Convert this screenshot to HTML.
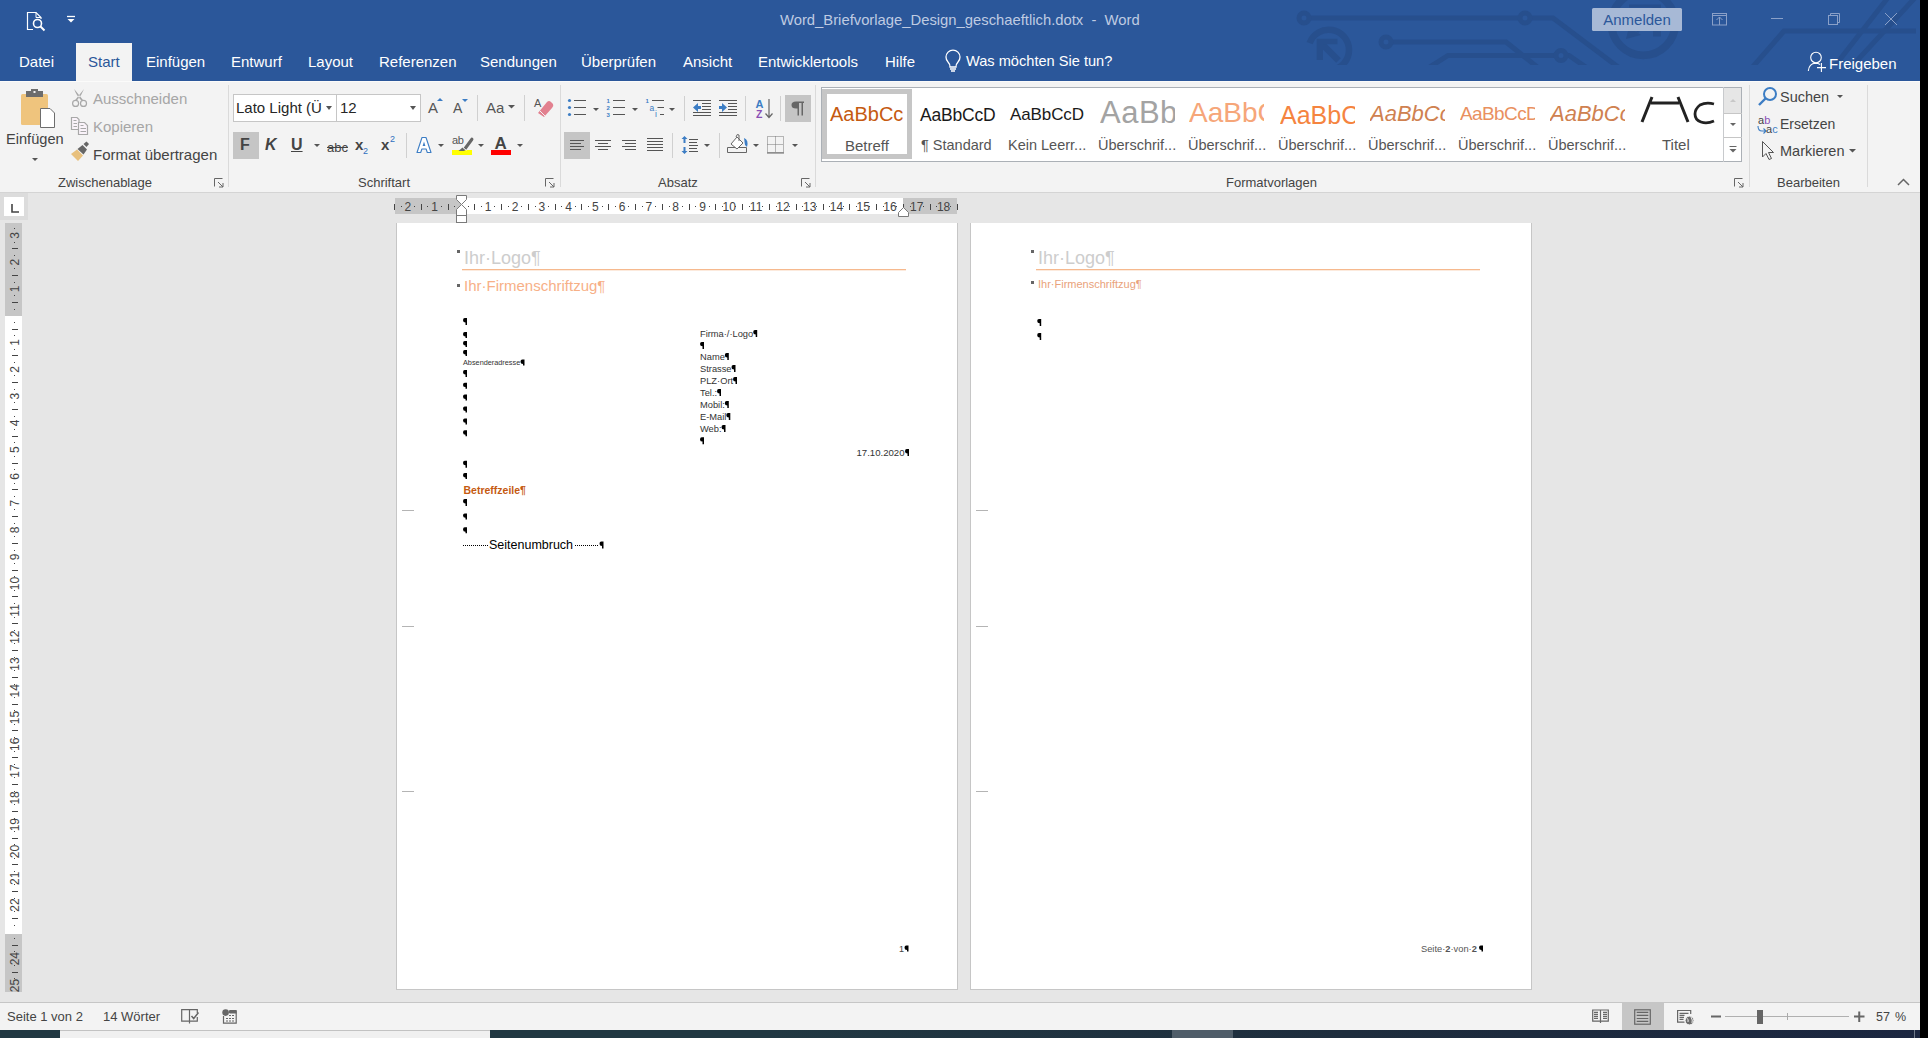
<!DOCTYPE html>
<html><head><meta charset="utf-8">
<style>
*{margin:0;padding:0;box-sizing:border-box}
html,body{width:1928px;height:1038px;overflow:hidden;background:#000;font-family:"Liberation Sans",sans-serif}
.a{position:absolute;white-space:nowrap}
#app{position:absolute;left:0;top:0;width:1920px;height:1030px;background:#e6e6e6;overflow:hidden}
#title{position:absolute;left:0;top:0;width:1920px;height:81px;background:#2b579a}
.tab{position:absolute;top:53px;font-size:15px;color:#fff;line-height:17px}
#ribbon{position:absolute;left:0;top:81px;width:1920px;height:112px;background:#f3f3f3;border-bottom:1px solid #d4d4d4}
.rt{position:absolute;font-size:15px;color:#444;line-height:17px;white-space:nowrap}
.gl{position:absolute;margin-top:1px;font-size:13px;color:#444;line-height:15px;white-space:nowrap}
.sep{position:absolute;top:4px;width:1px;height:102px;background:#dadada}
#status{position:absolute;left:0;top:1002px;width:1920px;height:28px;background:#f3f3f3;border-top:1px solid #c6c6c6}
.page{position:absolute;top:223px;width:562px;height:767px;background:#fff;border:1px solid #c6c6c6;border-top:none}
</style></head><body>
<div id="app">
 <div id="title">

  <svg class="a" style="left:0;top:0" width="1920" height="81">
   <defs><clipPath id="cp"><rect x="0" y="0" width="1920" height="65"/></clipPath></defs>
   <g clip-path="url(#cp)" fill="none" stroke="#274f8d" stroke-width="5" stroke-linecap="butt">
    <path d="M1309 18 H1519 M1530 18 H1553 L1622 70"/>
    <circle cx="1304" cy="18" r="5"/><circle cx="1525" cy="18" r="5"/>
    <path d="M1391 42 H1506 L1541 70"/>
    <circle cx="1386" cy="42" r="5"/>
    <path d="M1425 70 L1448 55.5 H1556 M1566 55.5 H1569 L1590 70"/>
    <circle cx="1561" cy="55.5" r="5"/>
    <path d="M1309.6 43.1 A20.3 20.3 0 1 1 1332.2 70" stroke-width="6.5"/>
    <path d="M1320 42 L1338.5 60.5" stroke-width="6.5"/>
    <path d="M1316.7 38.8 H1337.4 V44.3 H1323 V60 H1316.7 Z" fill="#274f8d" stroke="none"/>
    <circle cx="1643.3" cy="23.5" r="31.9" stroke-width="7.8"/>
    <path d="M1629 4.4 H1661 V36.4 H1653 V7.4 H1629 Z" fill="#274f8d" stroke="none"/>
    <path d="M1655 9 L1636 31" stroke-width="6"/>
    <path d="M1626 39 L1629 27 L1641 35 Z" fill="#274f8d" stroke="none"/>
    <path d="M1750 70 L1784 31 H1916" />
    <path d="M1831.7 70 L1890 -5 M1848.4 70 L1917.6 -5"/>
   </g>
  </svg>

  <svg class="a" style="left:0;top:0" width="1920" height="81" fill="none" stroke="#fff" stroke-width="1.2">
   <path d="M33 29.5 H27.5 V12.5 H36 L41 17.5 V19"/>
   <path d="M36 12.5 V17.5 H41" stroke-width="1"/>
   <circle cx="37.5" cy="23.5" r="4" stroke-width="1.6"/>
   <path d="M40.5 26.5 L44.5 30.5" stroke-width="1.9"/>
   <path d="M67 16.5 H75" stroke-width="1.3"/>
   <path d="M67.5 19 H74.5 L71 22.5 Z" fill="#fff" stroke="none"/>
   <g stroke="#8aa0c8" stroke-width="1">
    <rect x="1712.5" y="13.5" width="14" height="11.5"/>
    <path d="M1712.5 15.5 H1726.5 M1719.5 25 V17 M1716.5 20 L1719.5 17 L1722.5 20"/>
    <path d="M1771 18.5 H1783"/>
    <rect x="1828.5" y="15.5" width="9" height="9"/>
    <path d="M1830.5 15.5 V13.5 H1839.5 V22.5 H1837.5"/>
    <path d="M1885 13 L1897 25 M1897 13 L1885 25"/>
   </g>
   <path d="M948 62 A7 7 0 1 1 958 62 Q956 64 956 67 H950 Q950 64 948 62 Z M950 69 H956 M951 71 H955" stroke-width="1.3"/>
   <circle cx="1816" cy="57.5" r="5.3" stroke-width="1.1"/>
   <path d="M1808.3 71 Q1809 63.5 1815.5 63.3 Q1818.5 63.3 1820 64.5 M1821.4 63 V72 M1817 67.6 H1826" stroke-width="1.1"/>
  </svg>
  <div class="a tab" style="left:19px">Datei</div>
  <div class="a" style="left:76px;top:43px;width:56px;height:38px;background:#f3f3f3"></div>
  <div class="a tab" style="left:88px;color:#2b579a">Start</div>
  <div class="a tab" style="left:146px">Einfügen</div>
  <div class="a tab" style="left:231px">Entwurf</div>
  <div class="a tab" style="left:308px">Layout</div>
  <div class="a tab" style="left:379px">Referenzen</div>
  <div class="a tab" style="left:480px">Sendungen</div>
  <div class="a tab" style="left:581px">Überprüfen</div>
  <div class="a tab" style="left:683px">Ansicht</div>
  <div class="a tab" style="left:758px">Entwicklertools</div>
  <div class="a tab" style="left:885px">Hilfe</div>
  <div class="a tab" style="left:966px;font-size:14.6px">Was möchten Sie tun?</div>
  <div class="a tab" style="left:1829px;top:55px">Freigeben</div>
  <div class="a" style="left:780px;top:12px;font-size:14.8px;color:#bfcbe2;line-height:17px">Word_Briefvorlage_Design_geschaeftlich.dotx&nbsp; -&nbsp; Word</div>
  <div class="a" style="left:1592px;top:8px;width:90px;height:23px;border-radius:1.5px;background:#a7b9d6;color:#2b579a;font-size:15px;line-height:23px;text-align:center">Anmelden</div>
 </div>

 <div id="ribbon">
  <div class="a" style="left:0;top:0;width:1920px;height:1px;background:#fbfbfa"></div>
  <!-- Zwischenablage -->
  <svg class="a" style="left:0;top:0" width="1920" height="112">
   <rect x="21" y="13" width="27" height="31" rx="1.5" fill="#efc47d"/>
   <rect x="26" y="10" width="17" height="6" fill="#6d6d6d"/>
   <rect x="31" y="8" width="7" height="4" fill="#6d6d6d"/>
   <rect x="33.5" y="10" width="2" height="2" fill="#f3f3f3"/>
   <path d="M40.5 46.5 V27.5 H50 L54.5 32 V46.5 Z" fill="#fff" stroke="#6d6d6d"/>
   <path d="M32 77 L35 80 L38 77 Z" fill="#555"/>
   <g stroke="#a8a8a8" fill="none" stroke-width="1.2">
    <circle cx="75.6" cy="22.4" r="3"/><circle cx="83.5" cy="22.4" r="3"/>
    <path d="M71.5 36.5 H77 L79 38.5 V48.5 H71.5 Z" fill="#faf3fa"/>
    <path d="M78.5 41.5 H84.5 L87.5 44.5 V53.5 H78.5 Z" fill="#faf3fa"/>
    <path d="M73.5 39.5 H76.5 M73.5 42.5 H77 M73.5 45.5 H77 M80.5 44.5 H83.5 M80.5 47.5 H86 M80.5 50.5 H86" stroke-width="1"/>
   </g>
   <path d="M74.2 8 Q76 14 81.6 19.8 L83 19 Q79 14 74.2 8 Z M84 8 Q82 14 76.6 19.8 L75.2 19 Q79.2 14 84 8 Z" fill="#a8a8a8"/>
   <path d="M71 73 L77 68.5 L83 74.5 L78 80 Z" fill="#e8c07c"/>
   <path d="M77.5 68 L82.5 64 L87 68.5 L83.5 73.5 Z" fill="#666"/>
   <path d="M83.5 63 L86.5 60.5 L89 63 L86.5 66 Z" fill="#666"/>
   <g fill="none" stroke="#666" stroke-width="1">
    <path d="M214.5 105.5 V97.5 H222.5"/><path d="M218 101 L223 106 M223 102 V106 H219"/>
    <path d="M801.5 105.5 V97.5 H809.5"/><path d="M805 101 L810 106 M810 102 V106 H806"/>
    <path d="M1734.5 105.5 V97.5 H1742.5"/><path d="M1738 101 L1743 106 M1743 102 V106 H1739"/>
    <path d="M545.5 105.5 V97.5 H553.5"/><path d="M549 101 L554 106 M554 102 V106 H550"/>
   </g>
  </svg>
  <div class="rt" style="left:6px;top:50px;font-size:14.6px">Einfügen</div>
  <div class="rt" style="left:93px;top:9px;color:#a6a6a6">Ausschneiden</div>
  <div class="rt" style="left:93px;top:37px;color:#a6a6a6">Kopieren</div>
  <div class="rt" style="left:93px;top:65px">Format übertragen</div>
  <div class="gl" style="left:58px;top:93px">Zwischenablage</div>
  <div class="gl" style="left:358px;top:93px">Schriftart</div>
  <div class="gl" style="left:658px;top:93px">Absatz</div>
  <div class="gl" style="left:1226px;top:93px">Formatvorlagen</div>
  <div class="gl" style="left:1777px;top:93px">Bearbeiten</div>

  <!-- Schriftart -->
  <div class="a" style="left:233px;top:13px;width:104px;height:28px;background:#fff;border:1px solid #c6c6c6"></div>
  <div class="a" style="left:336px;top:13px;width:85px;height:28px;background:#fff;border:1px solid #c6c6c6"></div>
  <div class="rt" style="left:236px;top:18px;color:#262626">Lato Light (Ü</div>
  <div class="rt" style="left:340px;top:18px;color:#262626">12</div>
  <div class="a" style="left:233px;top:51px;width:26px;height:27px;background:#c5c5c5"></div>
  <div class="rt" style="left:240px;top:55px;font-weight:bold;font-size:16px;color:#444">F</div>
  <div class="rt" style="left:265px;top:55px;font-weight:bold;font-style:italic;font-size:16px;color:#444">K</div>
  <div class="rt" style="left:291px;top:55px;font-weight:bold;font-size:16px;color:#444;text-decoration:underline">U</div>
  <div class="rt" style="left:327px;top:58px;font-size:13px;color:#444;text-decoration:line-through">abc</div>
  <div class="rt" style="left:355px;top:55px;font-weight:bold;font-size:15px;color:#444">x</div>
  <div class="rt" style="left:363px;top:62px;font-size:9px;color:#2f6fbf">2</div>
  <div class="rt" style="left:381px;top:55px;font-weight:bold;font-size:15px;color:#444">x</div>
  <div class="rt" style="left:390px;top:50px;font-size:9px;color:#2f6fbf">2</div>
  <div class="rt" style="left:428px;top:18px;font-size:15px;color:#555">A</div>
  <div class="rt" style="left:453px;top:19px;font-size:14px;color:#555">A</div>
  <div class="rt" style="left:486px;top:18px;font-size:15px;color:#555">Aa</div>
  <div class="rt" style="left:534px;top:14px;font-size:11px;color:#555">A</div>
  <div class="rt" style="left:494.5px;top:53.5px;font-size:17px;font-weight:bold;color:#444">A</div>
  <div class="rt" style="left:452px;top:51px;font-size:11px;color:#555;letter-spacing:-0.3px">ab</div>
  
  <svg class="a" style="left:0;top:0" width="1920" height="112">
   <g fill="#555">
    <path d="M326 25 L332 25 L329 29 Z"/><path d="M410 25 L416 25 L413 29 Z"/>
    <path d="M314 63 L320 63 L317 66 Z"/><path d="M438 63 L444 63 L441 66 Z"/>
    <path d="M478 63 L484 63 L481 66 Z"/><path d="M517 63 L523 63 L520 66 Z"/>
    <path d="M508 24 L515 24 L511.5 27.5 Z"/>
   </g>
   <path d="M437 20 L440 17 L443 20 Z" fill="#3c7dc4"/>
   <path d="M462 18 L468 18 L465 21 Z" fill="#3c7dc4"/>
   <rect x="452" y="69" width="20" height="5" fill="#ffff00"/>
   <rect x="491" y="69" width="20" height="5" fill="#ff0000"/>
   <path d="M463.5 67 L470.5 57.5 Q471.5 56 473 57 Q474 58 473 59.5 L466 69 Z" fill="#666"/><path d="M462.5 66.5 L465.5 69 L464 70 H458.5 Z" fill="#666"/><path d="M462.5 66 L466.5 69.5" stroke="#f3f3f3" stroke-width="0.9"/><path d="M417 71.5 L422 56.5 H426 L431 71.5 H427.3 L426.1 68 H421.9 L420.7 71.5 Z" fill="#fff" stroke="#3c7dc4" stroke-width="1.1" stroke-linejoin="round"/><path d="M422.6 65 H425.4 L424 60.5 Z" fill="#3c7dc4"/>
   <path d="M538 32 L547 21 Q549 19 551 21 L553 23 Q554 25 552 27 L544 36 Z" fill="#e2808f"/>
   <path d="M540 30 L545 35" stroke="#f3f3f3" stroke-width="1"/>
   <g stroke="#d0d0d0"><path d="M406.5 52 V77 M477.5 14 V40 M524.5 14 V40 M684.5 15 V40 M745.5 15 V40 M780.5 15 V40 M672.5 52 V77 M719.5 52 V77"/></g>
  </svg>

  <!-- Absatz -->
  <div class="a" style="left:564px;top:51px;width:26px;height:27px;background:#c5c5c5"></div>
  <div class="a" style="left:785px;top:14px;width:26px;height:27px;background:#c5c5c5"></div>
  <svg class="a" style="left:0;top:0" width="1920" height="112">
   <g fill="#3c7dc4">
    <circle cx="569.5" cy="19.5" r="1.6"/><circle cx="569.5" cy="26.5" r="1.6"/><circle cx="569.5" cy="33.5" r="1.6"/>
   </g>
   <g stroke="#555" stroke-width="1" fill="none">
    <path d="M574 19.5 H586 M574 26.5 H586 M574 33.5 H586"/>
    <path d="M613 19.5 H625 M613 26.5 H625 M613 33.5 H625"/>
    <path d="M652 19.5 H664 M657.5 26.5 H664 M660 33.5 H664"/>
    <path d="M693 19.5 H711 M702 22.5 H711 M702 25.5 H711 M702 28.5 H711 M693 31.5 H711 M693 34.5 H711" />
    <path d="M719 19.5 H737 M728 22.5 H737 M728 25.5 H737 M728 28.5 H737 M719 31.5 H737 M719 34.5 H737" />
    <path d="M570 59.5 H584 M570 62.5 H581 M570 65.5 H584 M570 68.5 H581"/>
    <path d="M595 59.5 H611 M598 62.5 H608 M595 65.5 H611 M598 68.5 H608"/>
    <path d="M622 59.5 H636 M625 62.5 H636 M622 65.5 H636 M625 68.5 H636"/>
    <path d="M647 57.5 H663 M647 60.5 H663 M647 63.5 H663 M647 66.5 H663 M647 69.5 H663"/>
    <path d="M689 58.5 H698 M689 61.5 H697 M689 64.5 H698 M689 67.5 H697 M689 70.5 H698"/>
    <path d="M769 18 V36 M765.5 32.5 L769 36.5 L772.5 32.5" stroke="#666" stroke-width="1.2"/>
    <path d="M727.5 71.5 H746.5 V66.5 H727.5 Z" stroke="#666"/>
    <path d="M731 63 L737 56 L743 62 L737 68 Z" stroke="#666" fill="#fff"/>
    <path d="M736 56 Q737 52 739 54 V60" stroke="#666"/>
    <rect x="767.5" y="55.5" width="16" height="16" stroke="#777" stroke-dasharray="1 1"/>
    <path d="M775.5 55.5 V71.5 M767.5 63.5 H783.5" stroke="#777" stroke-dasharray="1 1"/>
    <path d="M767 72 H784" stroke="#666"/>
   </g>
   <path d="M744 57 Q749 59 747 66 L745 64 Z" fill="#3c7dc4"/>
   <g fill="#3c7dc4" font-family="Liberation Sans" font-size="6" font-weight="bold">
    <text x="606.5" y="22">1</text><text x="606.5" y="29">2</text><text x="606.5" y="36">3</text>
    <text x="645.5" y="22">1</text></g><g fill="#3c7dc4" font-family="Liberation Sans" font-size="8.5"><text x="649.5" y="29.5">a</text><text x="655" y="36">i</text>
   </g>
   <path d="M693 26.5 L698 22 V25 H701 V28 H698 V31 Z" fill="#3c7dc4"/>
   <path d="M727 26.5 L722 22 V25 H719 V28 H722 V31 Z" fill="#3c7dc4"/>
   <path d="M681.5 58 L684.5 55 L687.5 58 H685.5 V62 H683.5 V58 Z M681.5 70 L684.5 73 L687.5 70 H685.5 V66 H683.5 V70 Z" fill="#3c7dc4"/>
   <g fill="#555">
    <path d="M593 27 L599 27 L596 30 Z"/><path d="M632 27 L638 27 L635 30 Z"/><path d="M669 27 L675 27 L672 30 Z"/>
    <path d="M704 63 L710 63 L707 66 Z"/><path d="M753 63 L759 63 L756 66 Z"/><path d="M792 63 L798 63 L795 66 Z"/>
   </g>
   <text x="755.5" y="26.5" font-family="Liberation Sans" font-size="11" font-weight="bold" fill="#3c7dc4">A</text>
   <text x="756" y="36.5" font-family="Liberation Sans" font-size="10.5" font-weight="bold" fill="#8a4fb5">Z</text>
   <path d="M804 101.5 H796 Q791.5 101.5 791.5 105 Q791.5 108.5 796 108.5 H797.5 V115.5 H799 V103 H801.5 V115.5 H803 V103 H804 Z" transform="translate(0 -81)" fill="#666"/>
  </svg>

  <!-- Formatvorlagen -->
  <div class="a" style="left:821px;top:6px;width:921px;height:75px;background:#fff;border:1px solid #abb0b6"></div>
  <div class="a" style="left:822px;top:8px;width:90px;height:70px;border:5px solid #c6c6c6"></div>
  <div class="a" style="left:1724px;top:7px;width:17px;height:25px;background:#e6e6e6"></div>
  <div class="a" style="left:1723px;top:6px;width:1px;height:75px;background:#c8cacd"></div>
  <div class="a" style="left:1724px;top:32px;width:18px;height:1px;background:#c6c6c6"></div>
  <div class="a" style="left:1724px;top:56px;width:18px;height:1px;background:#c6c6c6"></div>
  <div class="a" style="left:822px;top:7px;width:900px;height:73px;overflow:hidden">
   <div class="a" style="left:8px;top:14px;font-size:20px;color:#c55a11;line-height:24px">AaBbCc</div>
   <div class="a" style="left:98px;top:16px;font-size:17.5px;color:#1a1a1a;line-height:22px;letter-spacing:-0.2px">AaBbCcD</div>
   <div class="a" style="left:188px;top:16px;font-size:17px;color:#1a1a1a;line-height:22px;letter-spacing:-0.1px">AaBbCcD</div>
   <div class="a" style="left:278px;top:7.5px;width:75px;overflow:hidden;font-size:31px;color:#a3a3a3;line-height:34px;letter-spacing:0.5px">AaBb</div>
   <div class="a" style="left:367px;top:9px;width:75px;overflow:hidden;font-size:28px;color:#f6a679;line-height:32px">AaBbC</div>
   <div class="a" style="left:458px;top:12px;width:75px;overflow:hidden;font-size:25px;color:#f5843f;line-height:30px">AaBbCc</div>
   <div class="a" style="left:548px;top:14px;width:75px;overflow:hidden;font-size:22px;color:#cf8150;line-height:24px;font-style:italic;letter-spacing:0px">AaBbCcD</div>
   <div class="a" style="left:638px;top:14px;width:75px;overflow:hidden;font-size:19px;color:#e99060;line-height:24px;letter-spacing:-0.6px">AaBbCcD</div>
   <div class="a" style="left:728px;top:14px;width:75px;overflow:hidden;font-size:22px;color:#cf8150;line-height:24px;font-style:italic;letter-spacing:0px">AaBbCcD</div>
  </div>
  <svg class="a" style="left:0;top:0" width="1920" height="112">
   <path d="M1642 41 L1652 16 M1651 22 H1679 M1678 16 L1688 41" stroke="#222" stroke-width="3" fill="none"/>
   <path d="M1714 23 Q1706 21 1700 24 Q1695 28 1695 33 Q1695 39 1701 41 Q1707 43 1714 40" stroke="#222" stroke-width="2.8" fill="none"/>
   <path d="M1730 21 L1733 18 L1736 21 Z" fill="#c8c8c8"/>
   <path d="M1730 42 L1736 42 L1733 45 Z" fill="#666"/>
   <path d="M1729.5 65.5 H1736.5" stroke="#666"/><path d="M1729.5 68 L1736.5 68 L1733 71.5 Z" fill="#666"/>
   <circle cx="1770" cy="13" r="6" stroke="#3c7dc4" stroke-width="2" fill="none"/>
   <path d="M1765.5 17.5 L1759 24" stroke="#3c7dc4" stroke-width="2.4"/>
   <path d="M1837 14 L1843 14 L1840 17 Z M1849 68 L1856 68 L1852.5 71.5 Z" fill="#555"/>
   <path d="M1762.5 60.5 V76 L1766 72.5 L1769 78.5 L1771.5 77.5 L1768.5 71.5 L1773.5 71.5 Z" stroke="#555" fill="#f3f3f3" stroke-width="1"/>
   <path d="M1758 45 Q1758 50 1762 50 H1766 M1763.5 47.5 L1766 50 L1763.5 52.5" stroke="#3c7dc4" stroke-width="1.1" fill="none"/>
   <path d="M1898 104 L1903.5 98.5 L1909 104" stroke="#666" stroke-width="1.5" fill="none"/>
  </svg>
  <div class="a" style="left:1758px;top:33px;font-size:11px;color:#444;line-height:12px">a<span style="color:#8a4fb5">b</span></div>
  <div class="a" style="left:1766px;top:42px;font-size:11px;color:#444;line-height:12px">a<span style="color:#3c7dc4">c</span></div>
  <div class="rt" style="left:1780px;top:8px;font-size:14.5px">Suchen</div>
  <div class="rt" style="left:1780px;top:35px;font-size:14px">Ersetzen</div>
  <div class="rt" style="left:1780px;top:62px;font-size:14.5px">Markieren</div>
  <div class="rt" style="left:845px;top:56px;color:#555">Betreff</div>
  <div class="rt" style="left:921px;top:56px;color:#555;font-size:14.5px">¶ Standard</div>
  <div class="rt" style="left:1008px;top:56px;color:#555;font-size:14.5px">Kein Leerr...</div>
  <div class="rt" style="left:1098px;top:56px;color:#555;font-size:14.5px">Überschrif...</div>
  <div class="rt" style="left:1188px;top:56px;color:#555;font-size:14.5px">Überschrif...</div>
  <div class="rt" style="left:1278px;top:56px;color:#555;font-size:14.5px">Überschrif...</div>
  <div class="rt" style="left:1368px;top:56px;color:#555;font-size:14.5px">Überschrif...</div>
  <div class="rt" style="left:1458px;top:56px;color:#555;font-size:14.5px">Überschrif...</div>
  <div class="rt" style="left:1548px;top:56px;color:#555;font-size:14.5px">Überschrif...</div>
  <div class="rt" style="left:1662px;top:55px;color:#555">Titel</div>
  <div class="sep" style="left:228px"></div>
  <div class="sep" style="left:560px"></div>
  <div class="sep" style="left:815px"></div>
  <div class="sep" style="left:1749px"></div>
  <div class="sep" style="left:1867px"></div>
 </div>
 <div id="status">

  <div class="a" style="left:1622px;top:0;width:42px;height:27px;background:#c6c6c6"></div>
  <svg class="a" style="left:0;top:-1002px" width="1920" height="1030">
   <g fill="none" stroke="#666" stroke-width="1.2">
    <path d="M189.5 1008.7 H181.7 V1020.2 H189.5 M189.5 1008.7 H197.3 V1012 M197.3 1016 V1020.2 H189.5 M189.5 1009 V1022.5"/>
    <path d="M191.5 1015 L193.7 1017.5 L198.5 1011.5" stroke-width="1.5"/>
    <path d="M229.5 1012 V1010 H236.2 V1022.2 H223.5 V1015"/>
    <path d="M1600.5 1009 H1592.7 V1020.2 H1608.3 V1009 H1600.5 V1022"/>
    <path d="M1594 1011.4 H1598 M1594 1013.4 H1598 M1594 1015.4 H1598 M1594 1017.4 H1598 M1603 1011.4 H1607 M1603 1013.4 H1607 M1603 1015.4 H1607 M1603 1017.4 H1607"/>
    <rect x="1634.7" y="1008.8" width="15.6" height="14.4"/>
    <path d="M1636.7 1011.4 H1648.3 M1636.7 1014.4 H1648.3 M1636.7 1017.5 H1648.3 M1636.7 1020.4 H1648.3"/>
    <path d="M1684.5 1021.2 H1677.6 V1009.5 H1690.7 V1013"/>
    <path d="M1679.5 1012.4 H1688.5 M1679.5 1014.4 H1684.5 M1679.5 1016.4 H1684 M1679.5 1018.4 H1683.5"/>
   </g>
   <rect x="229.5" y="1009" width="7" height="3.5" fill="#666"/>
   <circle cx="225.6" cy="1011.6" r="3.3" fill="#666"/>
   <g fill="#666"><rect x="229" y="1014" width="2" height="1"/><rect x="232" y="1014" width="2" height="1"/><rect x="226" y="1017" width="2" height="1"/><rect x="229" y="1017" width="2" height="1"/><rect x="232" y="1017" width="2" height="1"/><rect x="226" y="1019.5" width="2" height="1"/><rect x="229" y="1019.5" width="2" height="1"/><rect x="232" y="1019.5" width="2" height="1"/></g>
   <circle cx="1689.5" cy="1019.5" r="4.4" fill="#6a6a6a" stroke="#f3f3f3" stroke-width="1"/>
   <path d="M1686.5 1017 Q1689 1018 1688 1021 M1691 1016 Q1693 1019 1692 1022" stroke="#f3f3f3" stroke-width="1" fill="none"/>
   <rect x="1711" y="1014.5" width="10" height="2" fill="#666"/>
   <rect x="1725" y="1015" width="124" height="1" fill="#b0b0b0"/>
   <rect x="1787" y="1012" width="1" height="7" fill="#aaa"/>
   <rect x="1757" y="1009" width="6" height="14" fill="#666"/>
   <path d="M1854 1015.5 H1864.5 M1859.25 1010.5 V1021" stroke="#666" stroke-width="2"/>
  </svg>
  <div class="rt" style="left:7px;top:5px;font-size:13px">Seite 1 von 2</div>
  <div class="rt" style="left:103px;top:5px;font-size:13px">14 Wörter</div>
  <div class="rt" style="left:1876px;top:6px;font-size:12.5px;word-spacing:1.5px">57 %</div>
 </div>
<svg class="a" style="left:0;top:193px" width="1920" height="32"><rect x="395" y="5" width="66" height="16" fill="#c6c6c6"/><rect x="461" y="5" width="442" height="16" fill="#fff"/><rect x="903" y="5" width="54" height="16" fill="#c6c6c6"/><g fill="#444" font-family="Liberation Sans" font-size="12"><rect x="394" y="11" width="1" height="6"/><rect x="401" y="13" width="1" height="1"/><text x="407.8" y="17.5" text-anchor="middle">2</text><rect x="414" y="13" width="1" height="1"/><rect x="421" y="11" width="1" height="6"/><rect x="427" y="13" width="1" height="1"/><text x="434.6" y="17.5" text-anchor="middle">1</text><rect x="441" y="13" width="1" height="1"/><rect x="448" y="11" width="1" height="6"/><rect x="454" y="13" width="1" height="1"/><rect x="468" y="13" width="1" height="1"/><rect x="474" y="11" width="1" height="6"/><rect x="481" y="13" width="1" height="1"/><text x="488.2" y="17.5" text-anchor="middle">1</text><rect x="494" y="13" width="1" height="1"/><rect x="501" y="11" width="1" height="6"/><rect x="508" y="13" width="1" height="1"/><text x="515.0" y="17.5" text-anchor="middle">2</text><rect x="521" y="13" width="1" height="1"/><rect x="528" y="11" width="1" height="6"/><rect x="535" y="13" width="1" height="1"/><text x="541.8" y="17.5" text-anchor="middle">3</text><rect x="548" y="13" width="1" height="1"/><rect x="555" y="11" width="1" height="6"/><rect x="561" y="13" width="1" height="1"/><text x="568.6" y="17.5" text-anchor="middle">4</text><rect x="575" y="13" width="1" height="1"/><rect x="581" y="11" width="1" height="6"/><rect x="588" y="13" width="1" height="1"/><text x="595.3" y="17.5" text-anchor="middle">5</text><rect x="602" y="13" width="1" height="1"/><rect x="608" y="11" width="1" height="6"/><rect x="615" y="13" width="1" height="1"/><text x="622.1" y="17.5" text-anchor="middle">6</text><rect x="628" y="13" width="1" height="1"/><rect x="635" y="11" width="1" height="6"/><rect x="642" y="13" width="1" height="1"/><text x="648.9" y="17.5" text-anchor="middle">7</text><rect x="655" y="13" width="1" height="1"/><rect x="662" y="11" width="1" height="6"/><rect x="669" y="13" width="1" height="1"/><text x="675.7" y="17.5" text-anchor="middle">8</text><rect x="682" y="13" width="1" height="1"/><rect x="689" y="11" width="1" height="6"/><rect x="695" y="13" width="1" height="1"/><text x="702.5" y="17.5" text-anchor="middle">9</text><rect x="709" y="13" width="1" height="1"/><rect x="715" y="11" width="1" height="6"/><rect x="722" y="13" width="1" height="1"/><text x="729.3" y="17.5" text-anchor="middle">10</text><rect x="735" y="13" width="1" height="1"/><rect x="742" y="11" width="1" height="6"/><rect x="749" y="13" width="1" height="1"/><text x="756.1" y="17.5" text-anchor="middle">11</text><rect x="762" y="13" width="1" height="1"/><rect x="769" y="11" width="1" height="6"/><rect x="776" y="13" width="1" height="1"/><text x="782.9" y="17.5" text-anchor="middle">12</text><rect x="789" y="13" width="1" height="1"/><rect x="796" y="11" width="1" height="6"/><rect x="802" y="13" width="1" height="1"/><text x="809.7" y="17.5" text-anchor="middle">13</text><rect x="816" y="13" width="1" height="1"/><rect x="823" y="11" width="1" height="6"/><rect x="829" y="13" width="1" height="1"/><text x="836.5" y="17.5" text-anchor="middle">14</text><rect x="843" y="13" width="1" height="1"/><rect x="849" y="11" width="1" height="6"/><rect x="856" y="13" width="1" height="1"/><text x="863.2" y="17.5" text-anchor="middle">15</text><rect x="869" y="13" width="1" height="1"/><rect x="876" y="11" width="1" height="6"/><rect x="883" y="13" width="1" height="1"/><text x="890.0" y="17.5" text-anchor="middle">16</text><rect x="896" y="13" width="1" height="1"/><rect x="903" y="11" width="1" height="6"/><rect x="910" y="13" width="1" height="1"/><text x="916.8" y="17.5" text-anchor="middle">17</text><rect x="923" y="13" width="1" height="1"/><rect x="930" y="11" width="1" height="6"/><rect x="936" y="13" width="1" height="1"/><text x="943.6" y="17.5" text-anchor="middle">18</text><rect x="950" y="13" width="1" height="1"/><rect x="957" y="11" width="1" height="6"/></g><path d="M456.5 2.5 H466.5 V6.5 L461.5 11.5 L456.5 6.5 Z" fill="#fff" stroke="#7a7a7a"/><path d="M456.5 22.5 H466.5 V16.5 L461.5 11.5 L456.5 16.5 Z" fill="#fff" stroke="#7a7a7a"/><rect x="456.5" y="22.5" width="10" height="7" fill="#fff" stroke="#7a7a7a"/><path d="M898.5 23.5 H908.5 V19.5 L903.5 14.5 L898.5 19.5 Z" fill="#fff" stroke="#7a7a7a"/><rect x="0" y="0" width="28" height="27" fill="#dcdcdc"/><rect x="4" y="4" width="20" height="19" fill="#fff"/><path d="M12 11 V19 H19" stroke="#444" stroke-width="1.6" fill="none"/></svg>
<svg class="a" style="left:0;top:0" width="30" height="1000"><rect x="5" y="223" width="17" height="93" fill="#c6c6c6"/><rect x="5" y="316" width="17" height="618" fill="#fff"/><rect x="5" y="934" width="17" height="58" fill="#c6c6c6"/><g fill="#444" font-family="Liberation Sans" font-size="12"><rect x="14" y="228" width="1" height="1"/><text x="0" y="0" transform="translate(18.5 235.3) rotate(-90)" text-anchor="middle">3</text><rect x="14" y="242" width="1" height="1"/><rect x="12" y="248" width="6" height="1"/><rect x="14" y="255" width="1" height="1"/><text x="0" y="0" transform="translate(18.5 262.1) rotate(-90)" text-anchor="middle">2</text><rect x="14" y="268" width="1" height="1"/><rect x="12" y="275" width="6" height="1"/><rect x="14" y="282" width="1" height="1"/><text x="0" y="0" transform="translate(18.5 288.9) rotate(-90)" text-anchor="middle">1</text><rect x="14" y="295" width="1" height="1"/><rect x="12" y="302" width="6" height="1"/><rect x="14" y="309" width="1" height="1"/><rect x="14" y="322" width="1" height="1"/><rect x="12" y="329" width="6" height="1"/><rect x="14" y="335" width="1" height="1"/><text x="0" y="0" transform="translate(18.5 342.5) rotate(-90)" text-anchor="middle">1</text><rect x="14" y="349" width="1" height="1"/><rect x="12" y="355" width="6" height="1"/><rect x="14" y="362" width="1" height="1"/><text x="0" y="0" transform="translate(18.5 369.3) rotate(-90)" text-anchor="middle">2</text><rect x="14" y="375" width="1" height="1"/><rect x="12" y="382" width="6" height="1"/><rect x="14" y="389" width="1" height="1"/><text x="0" y="0" transform="translate(18.5 396.1) rotate(-90)" text-anchor="middle">3</text><rect x="14" y="402" width="1" height="1"/><rect x="12" y="409" width="6" height="1"/><rect x="14" y="416" width="1" height="1"/><text x="0" y="0" transform="translate(18.5 422.9) rotate(-90)" text-anchor="middle">4</text><rect x="14" y="429" width="1" height="1"/><rect x="12" y="436" width="6" height="1"/><rect x="14" y="442" width="1" height="1"/><text x="0" y="0" transform="translate(18.5 449.6) rotate(-90)" text-anchor="middle">5</text><rect x="14" y="456" width="1" height="1"/><rect x="12" y="463" width="6" height="1"/><rect x="14" y="469" width="1" height="1"/><text x="0" y="0" transform="translate(18.5 476.4) rotate(-90)" text-anchor="middle">6</text><rect x="14" y="483" width="1" height="1"/><rect x="12" y="489" width="6" height="1"/><rect x="14" y="496" width="1" height="1"/><text x="0" y="0" transform="translate(18.5 503.2) rotate(-90)" text-anchor="middle">7</text><rect x="14" y="509" width="1" height="1"/><rect x="12" y="516" width="6" height="1"/><rect x="14" y="523" width="1" height="1"/><text x="0" y="0" transform="translate(18.5 530.0) rotate(-90)" text-anchor="middle">8</text><rect x="14" y="536" width="1" height="1"/><rect x="12" y="543" width="6" height="1"/><rect x="14" y="550" width="1" height="1"/><text x="0" y="0" transform="translate(18.5 556.8) rotate(-90)" text-anchor="middle">9</text><rect x="14" y="563" width="1" height="1"/><rect x="12" y="570" width="6" height="1"/><rect x="14" y="576" width="1" height="1"/><text x="0" y="0" transform="translate(18.5 583.6) rotate(-90)" text-anchor="middle">10</text><rect x="14" y="590" width="1" height="1"/><rect x="12" y="596" width="6" height="1"/><rect x="14" y="603" width="1" height="1"/><text x="0" y="0" transform="translate(18.5 610.4) rotate(-90)" text-anchor="middle">11</text><rect x="14" y="617" width="1" height="1"/><rect x="12" y="623" width="6" height="1"/><rect x="14" y="630" width="1" height="1"/><text x="0" y="0" transform="translate(18.5 637.2) rotate(-90)" text-anchor="middle">12</text><rect x="14" y="643" width="1" height="1"/><rect x="12" y="650" width="6" height="1"/><rect x="14" y="657" width="1" height="1"/><text x="0" y="0" transform="translate(18.5 664.0) rotate(-90)" text-anchor="middle">13</text><rect x="14" y="670" width="1" height="1"/><rect x="12" y="677" width="6" height="1"/><rect x="14" y="684" width="1" height="1"/><text x="0" y="0" transform="translate(18.5 690.8) rotate(-90)" text-anchor="middle">14</text><rect x="14" y="697" width="1" height="1"/><rect x="12" y="704" width="6" height="1"/><rect x="14" y="710" width="1" height="1"/><text x="0" y="0" transform="translate(18.5 717.5) rotate(-90)" text-anchor="middle">15</text><rect x="14" y="724" width="1" height="1"/><rect x="12" y="730" width="6" height="1"/><rect x="14" y="737" width="1" height="1"/><text x="0" y="0" transform="translate(18.5 744.3) rotate(-90)" text-anchor="middle">16</text><rect x="14" y="751" width="1" height="1"/><rect x="12" y="757" width="6" height="1"/><rect x="14" y="764" width="1" height="1"/><text x="0" y="0" transform="translate(18.5 771.1) rotate(-90)" text-anchor="middle">17</text><rect x="14" y="777" width="1" height="1"/><rect x="12" y="784" width="6" height="1"/><rect x="14" y="791" width="1" height="1"/><text x="0" y="0" transform="translate(18.5 797.9) rotate(-90)" text-anchor="middle">18</text><rect x="14" y="804" width="1" height="1"/><rect x="12" y="811" width="6" height="1"/><rect x="14" y="818" width="1" height="1"/><text x="0" y="0" transform="translate(18.5 824.7) rotate(-90)" text-anchor="middle">19</text><rect x="14" y="831" width="1" height="1"/><rect x="12" y="838" width="6" height="1"/><rect x="14" y="844" width="1" height="1"/><text x="0" y="0" transform="translate(18.5 851.5) rotate(-90)" text-anchor="middle">20</text><rect x="14" y="858" width="1" height="1"/><rect x="12" y="864" width="6" height="1"/><rect x="14" y="871" width="1" height="1"/><text x="0" y="0" transform="translate(18.5 878.3) rotate(-90)" text-anchor="middle">21</text><rect x="14" y="884" width="1" height="1"/><rect x="12" y="891" width="6" height="1"/><rect x="14" y="898" width="1" height="1"/><text x="0" y="0" transform="translate(18.5 905.1) rotate(-90)" text-anchor="middle">22</text><rect x="14" y="911" width="1" height="1"/><rect x="12" y="918" width="6" height="1"/><rect x="14" y="925" width="1" height="1"/><rect x="14" y="938" width="1" height="1"/><rect x="12" y="945" width="6" height="1"/><rect x="14" y="951" width="1" height="1"/><text x="0" y="0" transform="translate(18.5 958.7) rotate(-90)" text-anchor="middle">24</text><rect x="14" y="965" width="1" height="1"/><rect x="12" y="972" width="6" height="1"/><rect x="14" y="978" width="1" height="1"/><text x="0" y="0" transform="translate(18.5 985.5) rotate(-90)" text-anchor="middle">25</text></g></svg>
 <div class="page" style="left:396px"></div>
 <div class="page" style="left:970px"></div>
<svg class="a" style="left:0;top:0" width="1920" height="1030" font-family="Liberation Sans">
<rect x="457" y="250" width="3" height="3" fill="#666"/>
<rect x="457" y="284" width="3" height="3" fill="#666"/>
<text x="464" y="264" font-size="18" fill="#cdcdcd">Ihr·Logo¶</text>
<rect x="462" y="269" width="444" height="1.3" fill="#f6b98e"/>
<text x="464" y="291" font-size="15" fill="#f7b087">Ihr·Firmenschriftzug¶</text>
<rect x="1031" y="250" width="3" height="3" fill="#666"/>
<rect x="1031" y="281" width="3" height="3" fill="#666"/>
<text x="1038" y="264" font-size="18" fill="#cdcdcd">Ihr·Logo¶</text>
<rect x="1036" y="269" width="444" height="1.3" fill="#f6b98e"/>
<text x="1038" y="288" font-size="11" fill="#e9a27a">Ihr·Firmenschriftzug¶</text>
<path d="M467.0 318.0 H464.8 Q463.0 318.0 463.0 320.2 Q463.0 322.4 465.5 322.4 V325.0 H467.0 Z" fill="#000"/>
<path d="M467.0 332.0 H464.8 Q463.0 332.0 463.0 334.2 Q463.0 336.4 465.5 336.4 V338.0 H467.0 Z" fill="#000"/>
<path d="M467.0 341.0 H464.8 Q463.0 341.0 463.0 343.2 Q463.0 345.4 465.5 345.4 V347.0 H467.0 Z" fill="#000"/>
<path d="M467.0 350.0 H464.8 Q463.0 350.0 463.0 352.2 Q463.0 354.4 465.5 354.4 V356.0 H467.0 Z" fill="#000"/>
<path d="M467.0 370.0 H464.8 Q463.0 370.0 463.0 372.2 Q463.0 374.4 465.5 374.4 V377.0 H467.0 Z" fill="#000"/>
<path d="M467.0 382.7 H464.8 Q463.0 382.7 463.0 384.9 Q463.0 387.1 465.5 387.1 V388.7 H467.0 Z" fill="#000"/>
<path d="M467.0 394.6 H464.8 Q463.0 394.6 463.0 396.8 Q463.0 399.0 465.5 399.0 V400.6 H467.0 Z" fill="#000"/>
<path d="M467.0 406.5 H464.8 Q463.0 406.5 463.0 408.7 Q463.0 410.9 465.5 410.9 V412.5 H467.0 Z" fill="#000"/>
<path d="M467.0 418.4 H464.8 Q463.0 418.4 463.0 420.6 Q463.0 422.8 465.5 422.8 V424.4 H467.0 Z" fill="#000"/>
<path d="M467.0 430.3 H464.8 Q463.0 430.3 463.0 432.5 Q463.0 434.7 465.5 434.7 V436.3 H467.0 Z" fill="#000"/>
<path d="M467.0 460.8 H464.8 Q463.0 460.8 463.0 463.0 Q463.0 465.2 465.5 465.2 V467.8 H467.0 Z" fill="#000"/>
<path d="M467.0 473.0 H464.8 Q463.0 473.0 463.0 475.2 Q463.0 477.4 465.5 477.4 V479.0 H467.0 Z" fill="#000"/>
<path d="M467.0 499.0 H464.8 Q463.0 499.0 463.0 501.2 Q463.0 503.4 465.5 503.4 V506.0 H467.0 Z" fill="#000"/>
<path d="M467.0 513.4 H464.8 Q463.0 513.4 463.0 515.6 Q463.0 517.8 465.5 517.8 V519.4 H467.0 Z" fill="#000"/>
<path d="M467.0 527.3 H464.8 Q463.0 527.3 463.0 529.5 Q463.0 531.7 465.5 531.7 V533.3 H467.0 Z" fill="#000"/>
<text x="463" y="365" font-size="7.3" fill="#333">Absenderadresse</text>
<path d="M524.5 359.5 H522.3 Q520.5 359.5 520.5 361.7 Q520.5 363.9 523.0 363.9 V365.5 H524.5 Z" fill="#000"/>
<text x="700" y="337" font-size="9.3" fill="#333">Firma·/·Logo</text>
<path d="M757.2 330.0 H755.0 Q753.2 330.0 753.2 332.2 Q753.2 334.4 755.7 334.4 V337.0 H757.2 Z" fill="#000"/>
<text x="700" y="360" font-size="9.3" fill="#333">Name</text>
<path d="M728.8 353.0 H726.6 Q724.8 353.0 724.8 355.2 Q724.8 357.4 727.3 357.4 V360.0 H728.8 Z" fill="#000"/>
<text x="700" y="372" font-size="9.3" fill="#333">Strasse</text>
<path d="M735.5 365.0 H733.3 Q731.5 365.0 731.5 367.2 Q731.5 369.4 734.0 369.4 V372.0 H735.5 Z" fill="#000"/>
<text x="700" y="384" font-size="9.3" fill="#333">PLZ·Ort</text>
<path d="M737.0 377.0 H734.8 Q733.0 377.0 733.0 379.2 Q733.0 381.4 735.5 381.4 V384.0 H737.0 Z" fill="#000"/>
<text x="700" y="396" font-size="9.3" fill="#333">Tel.:</text>
<path d="M721.0 389.0 H718.8 Q717.0 389.0 717.0 391.2 Q717.0 393.4 719.5 393.4 V396.0 H721.0 Z" fill="#000"/>
<text x="700" y="408" font-size="9.3" fill="#333">Mobil:</text>
<path d="M728.8 401.0 H726.6 Q724.8 401.0 724.8 403.2 Q724.8 405.4 727.3 405.4 V408.0 H728.8 Z" fill="#000"/>
<text x="700" y="420" font-size="9.3" fill="#333">E-Mail</text>
<path d="M730.3 413.0 H728.1 Q726.3 413.0 726.3 415.2 Q726.3 417.4 728.8 417.4 V420.0 H730.3 Z" fill="#000"/>
<text x="700" y="432" font-size="9.3" fill="#333">Web:</text>
<path d="M725.5 425.0 H723.3 Q721.5 425.0 721.5 427.2 Q721.5 429.4 724.0 429.4 V432.0 H725.5 Z" fill="#000"/>
<path d="M704.0 341.9 H701.8 Q700.0 341.9 700.0 344.1 Q700.0 346.3 702.5 346.3 V348.9 H704.0 Z" fill="#000"/>
<path d="M704.0 437.2 H701.8 Q700.0 437.2 700.0 439.4 Q700.0 441.6 702.5 441.6 V444.2 H704.0 Z" fill="#000"/>
<text x="856.5" y="456" font-size="9.6" fill="#333">17.10.2020</text>
<path d="M909.0 449.0 H906.8 Q905.0 449.0 905.0 451.2 Q905.0 453.4 907.5 453.4 V456.0 H909.0 Z" fill="#000"/>
<text x="463.5" y="494" font-size="10.5" font-weight="bold" fill="#c55a11">Betreffzeile¶</text>
<path d="M463 545.5 H488 M575 545.5 H599" stroke="#000" stroke-width="1" stroke-dasharray="1 1"/>
<text x="489" y="549" font-size="12.5" fill="#000">Seitenumbruch</text>
<path d="M603.5 541.5 H601.3 Q599.5 541.5 599.5 543.7 Q599.5 545.9 602.0 545.9 V548.5 H603.5 Z" fill="#000"/>
<text x="899" y="952" font-size="9" fill="#444">1</text>
<path d="M908.5 945.5 H906.3 Q904.5 945.5 904.5 947.7 Q904.5 949.9 907.0 949.9 V951.5 H908.5 Z" fill="#000"/>
<text x="1421" y="952" font-size="9.3" fill="#555">Seite·<tspan font-weight="bold">2</tspan>·von·<tspan font-weight="bold">2</tspan></text>
<path d="M1483.0 945.5 H1480.8 Q1479.0 945.5 1479.0 947.7 Q1479.0 949.9 1481.5 949.9 V951.5 H1483.0 Z" fill="#000"/>
<rect x="402" y="510" width="12" height="1" fill="#b4b4b4"/>
<rect x="976" y="510" width="12" height="1" fill="#b4b4b4"/>
<rect x="402" y="626" width="12" height="1" fill="#b4b4b4"/>
<rect x="976" y="626" width="12" height="1" fill="#b4b4b4"/>
<rect x="402" y="791" width="12" height="1" fill="#b4b4b4"/>
<rect x="976" y="791" width="12" height="1" fill="#b4b4b4"/>
<path d="M1041.2 318.9 H1039.0 Q1037.2 318.9 1037.2 321.1 Q1037.2 323.3 1039.7 323.3 V325.9 H1041.2 Z" fill="#000"/>
<path d="M1041.2 333.0 H1039.0 Q1037.2 333.0 1037.2 335.2 Q1037.2 337.4 1039.7 337.4 V340.0 H1041.2 Z" fill="#000"/>
</svg>
</div>
<div class="a" style="left:0;top:1030px;width:1920px;height:8px;background:linear-gradient(90deg,#213842 0%,#213842 40%,#1e2d3d 70%,#1b2640 100%)"></div>
<div class="a" style="left:60px;top:1030px;width:430px;height:8px;background:#f0f0f0;border-top:1px solid #c2c2c2"></div>
<div class="a" style="left:1172px;top:1030px;width:61px;height:8px;background:#4f5d69"></div>
<div class="a" style="left:1914px;top:1030px;width:1px;height:8px;background:#6f7a8a"></div>
</body></html>
